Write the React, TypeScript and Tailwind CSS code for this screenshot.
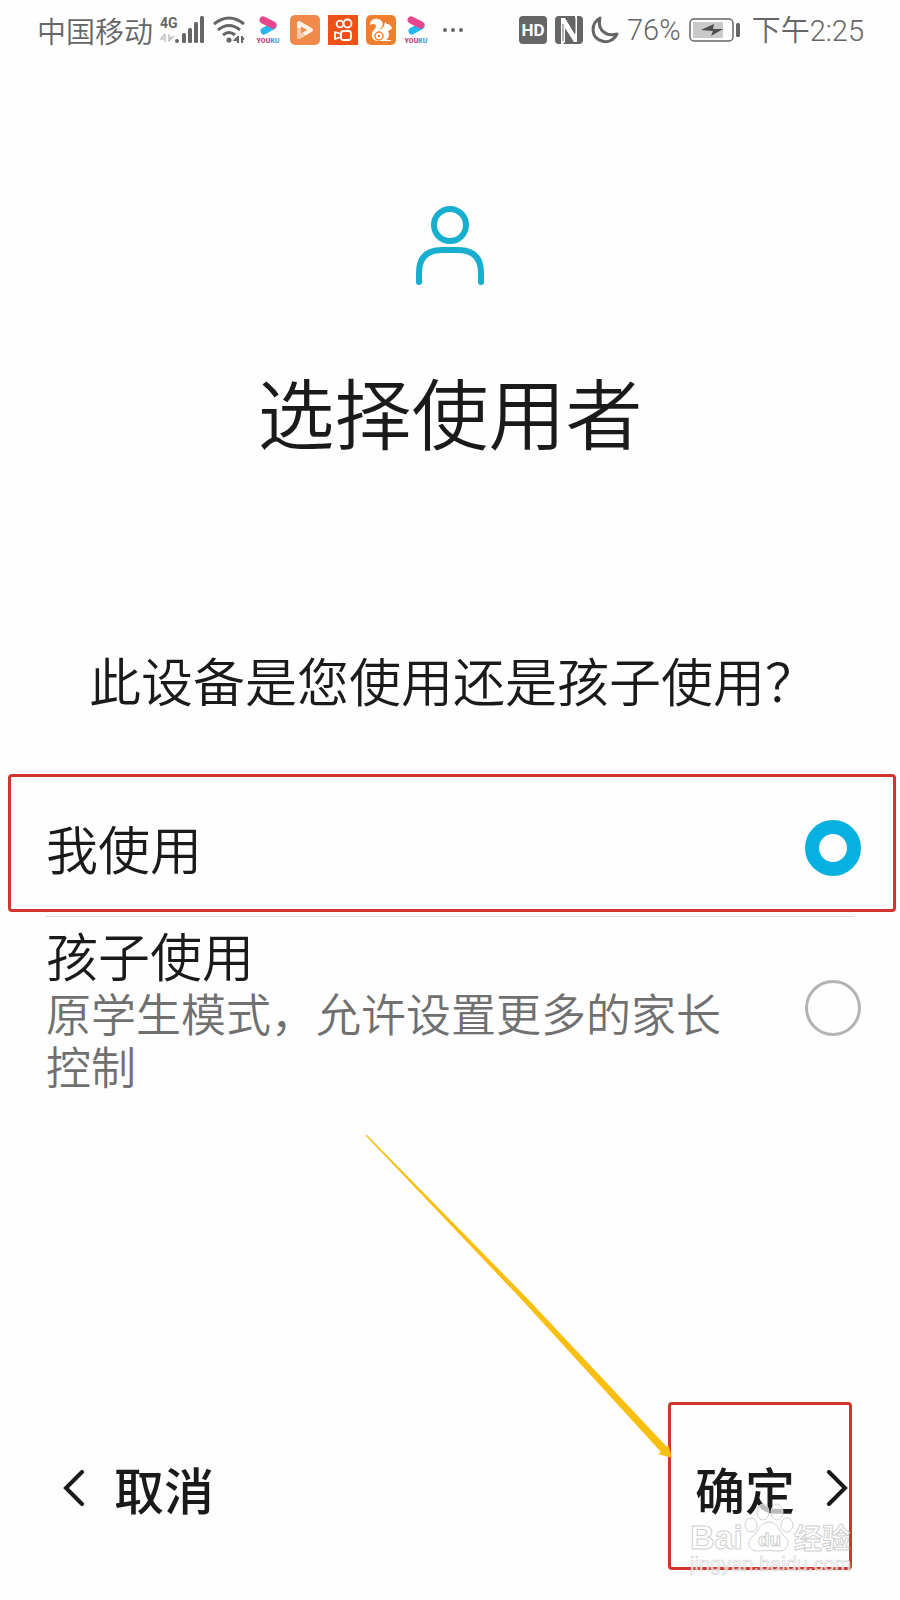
import { useState } from "react";

const FONT = 'font-["Noto_Sans_CJK_SC",sans-serif]';

const OPTIONS = [
    { id: "me", label: "我使用", hint: "" },
    { id: "child", label: "孩子使用", hint: "原学生模式，允许设置更多的家长控制" },
];

function SignalIcon() {
    return (
        <svg className="w-[46px] h-7" viewBox="0 0 46 28" fill="#666">
            <text x="0" y="12" fontSize="14" fontWeight="700" fontFamily="Roboto, sans-serif">
                4G
            </text>
            <path d="M5 18v8M5 18l-4 5h4M9 26v-8M9 22l4-1-4 4" stroke="#c4c4c4" strokeWidth="1.5" fill="none" />
            <circle cx="17" cy="25" r="2" />
            <rect x="22" y="17" width="4" height="10" rx="1.5" />
            <rect x="28" y="12" width="4" height="15" rx="1.5" />
            <rect x="34" y="6" width="4" height="21" rx="1.5" />
            <rect x="40" y="0" width="4" height="27" rx="1.5" />
        </svg>
    );
}

function WifiIcon() {
    return (
        <svg className="w-8 h-7" viewBox="0 0 32 28" fill="none" stroke="#666" strokeWidth="3">
            <path d="M1 8Q16-4 31 8M5 14Q16 5 27 14M10 19Q16 14 22 19" />
            <circle cx="16" cy="24" r="2.6" fill="#666" stroke="none" />
            <path d="M25 20v7M25 21l-3 3h3M29 20v7M29 24l2-2" strokeWidth="2" />
        </svg>
    );
}

function YoukuIcon() {
    return (
        <svg className="w-[26px] h-7" viewBox="0 0 26 28">
            <path d="M8 15l9-5" stroke="#28b8ee" strokeWidth="7" strokeLinecap="round" />
            <path d="M7 4l10 5" stroke="#e8468c" strokeWidth="7" strokeLinecap="round" />
            <text x="12" y="27" textAnchor="middle" fontSize="7" fontWeight="900" fontFamily="Roboto, sans-serif" fill="#c0417f">
                YOU<tspan fill="#4ba3dc">KU</tspan>
            </text>
        </svg>
    );
}

function VideoIcon() {
    return (
        <svg className="w-[30px] h-[30px]" viewBox="0 0 30 30">
            <rect width="30" height="30" rx="5" fill="#f08a4b" />
            <path d="M9 8v14l12-7z" fill="#f08a4b" stroke="#fff1e4" strokeWidth="4" strokeLinejoin="round" />
            <path d="M9 13v9l5-3" fill="none" stroke="#f8c9a6" strokeWidth="4" strokeLinejoin="round" />
        </svg>
    );
}

function KuaishouIcon() {
    return (
        <svg className="w-[30px] h-[30px]" viewBox="0 0 30 30" fill="none" stroke="#fff" strokeWidth="1.8">
            <rect width="30" height="30" fill="#ee5117" stroke="none" />
            <circle cx="12" cy="9" r="3.4" />
            <circle cx="19.5" cy="8.5" r="4" />
            <rect x="13" y="16" width="10" height="9" rx="2.5" />
            <path d="M7 17v7l6-2v-3z" strokeLinejoin="round" />
        </svg>
    );
}

function SquirrelIcon() {
    return (
        <svg className="w-[30px] h-[30px]" viewBox="0 0 30 30">
            <rect width="30" height="30" rx="5" fill="#ef7f2e" />
            <path
                d="M4 10C4 5 8 3 12 4c5 1 6 6 3 9l-2 2c2-1 4-2 5-4l1-4 2 2c3 0 4 2 5 4-1 2-3 2-4 3 2 4 1 7-2 9h5v1H12c-5 0-7-4-6-8 1-3 4-4 4-7 0-2-3-3-6-1z"
                fill="#fff"
            />
            <circle cx="13" cy="21" r="4" fill="none" stroke="#ef7f2e" strokeWidth="1.5" />
            <circle cx="13" cy="21" r="1.2" fill="#ef7f2e" />
        </svg>
    );
}

function NfcIcon() {
    return (
        <svg className="w-7 h-7" viewBox="0 0 28 28">
            <rect width="28" height="28" rx="4" fill="#666" />
            <path d="M7 28V3M21 0v25" fill="none" stroke="#fff" strokeWidth="2" />
            <path d="M6 2h4l12 20v4h-3L10 12v14l-2 2H6z" fill="#fff" />
            <path d="M8 8v17M20 2v15" stroke="#666" strokeWidth="1" />
        </svg>
    );
}

function MoonIcon() {
    return (
        <svg className="w-7 h-7" viewBox="0 0 28 28" fill="none" stroke="#666" strokeWidth="3" strokeLinejoin="round">
            <path d="M9 2C-1 8 0 22 11 25c6 2 12-1 15-7C15 21 6 14 9 2z" />
        </svg>
    );
}

function BatteryIcon() {
    return (
        <svg className="w-[51px] h-6" viewBox="0 0 51 24">
            <rect x="1" y="1" width="43" height="22" rx="4" fill="none" stroke="#666" strokeWidth="1.5" />
            <rect x="4" y="4" width="30" height="16" fill="#c9c9c9" />
            <path d="M12 12l13-6-1 5h10L22 18l2-5z" fill="#4d4d4d" />
            <rect x="47" y="5" width="4" height="14" rx="1.5" fill="#666" />
        </svg>
    );
}

function StatusBar() {
    return (
        <header className="flex items-center justify-between h-[60px] pl-[37px] pr-9 text-[#666] text-[29px] leading-none font-[350]">
            <div className="flex items-center gap-[7px]">
                <span>中国移动</span>
                <SignalIcon />
                <WifiIcon />
                <div className="flex items-center gap-2 pl-1">
                    <YoukuIcon />
                    <VideoIcon />
                    <KuaishouIcon />
                    <SquirrelIcon />
                    <YoukuIcon />
                </div>
                <svg className="w-6 h-6 ml-1" viewBox="0 0 24 24" fill="#666">
                    <circle cx="4" cy="12" r="2" />
                    <circle cx="12" cy="12" r="2" />
                    <circle cx="20" cy="12" r="2" />
                </svg>
            </div>
            <div className="flex items-center gap-2">
                <span className="flex items-center justify-center w-7 h-7 rounded bg-[#666] text-white text-[17px] font-bold font-[Roboto,sans-serif]">
                    HD
                </span>
                <NfcIcon />
                <MoonIcon />
                <span className="font-[Roboto,sans-serif]">76%</span>
                <BatteryIcon />
                <span className="pl-1">
                    下午<span className="font-[Roboto,sans-serif]">2:25</span>
                </span>
            </div>
        </header>
    );
}

function Watermark() {
    return (
        <svg
            className="absolute right-0 -bottom-4 w-[162px] h-[84px] pointer-events-none"
            viewBox="0 0 162 84"
            fill="#fff"
            fillOpacity="0.7"
            stroke="#d0d0d0"
            strokeWidth="1"
            aria-hidden="true"
        >
            <g fontFamily="Liberation Sans, sans-serif" fontWeight="700">
                <text x="0" y="47" fontSize="34">Bai</text>
                <ellipse cx="61" cy="23" rx="6" ry="7" />
                <ellipse cx="73" cy="10" rx="6" ry="8" />
                <ellipse cx="87" cy="10" rx="6" ry="8" />
                <ellipse cx="97" cy="23" rx="6" ry="7" />
                <path d="M79 20c9 0 10 10 16 15 6 6 2 14-6 14-5 0-15-1-21 0-9 0-12-8-6-14 6-5 8-15 17-15z" />
                <text x="68" y="44" fontSize="19">du</text>
                <text x="104" y="47" fontSize="28" fontFamily="Noto Sans CJK SC, sans-serif">经验</text>
            </g>
            <text x="0" y="69" fontSize="20" fontFamily="Liberation Sans, sans-serif" strokeWidth="0.6">
                jingyan.baidu.com
            </text>
        </svg>
    );
}

export default function App() {
    const [selected, setSelected] = useState("me");

    return (
        <div className={`relative flex flex-col min-h-screen bg-[#fefefe] text-[#1a1a1a] ${FONT}`} lang="zh-CN">
            <StatusBar />

            <main className="flex-1">
                <svg
                    className="block mx-auto mt-[145px] w-[70px] h-20"
                    viewBox="0 0 70 80"
                    fill="none"
                    stroke="#17aed0"
                    strokeWidth="6"
                    strokeLinecap="round"
                >
                    <circle cx="35" cy="20" r="16" />
                    <path d="M4 77V68Q4 45 27 45H43Q66 45 66 68V77" />
                </svg>
                <h1 className="mt-[70px] text-center text-[77px] leading-[112px] font-[350]">选择使用者</h1>
                <p className="mt-[175px] px-[89px] text-[52px] leading-[76px] whitespace-nowrap font-[350]">
                    此设备是您使用还是孩子使用？
                </p>

                <fieldset className="mt-[56px]">
                    {OPTIONS.map((option, i) => (
                        <div key={option.id}>
                            {i > 0 && <hr className="ml-[46px] mr-[46px] mt-1 border-[#dcdce0]" />}
                            <label
                                className={`flex items-center justify-between ${
                                    i === 0
                                        ? "ml-2 mr-1 h-[138px] pt-[10px] pl-[35px] pr-[32px] border-3 border-[#d3352e] rounded-sm"
                                        : "pl-[46px] pr-[39px] pt-[7px] pb-1"
                                }`}
                            >
                                <span className="w-[680px]">
                                    <span className="block text-[52px] leading-[62px] font-[350]">{option.label}</span>
                                    {option.hint && (
                                        <span className="block text-[45px] leading-[53px] font-[350] text-[#707070]">
                                            {option.hint}
                                        </span>
                                    )}
                                </span>
                                <input
                                    type="radio"
                                    name="user"
                                    className="appearance-none shrink-0 size-14 rounded-full border-3 border-[#b3b3b3] checked:border-[14px] checked:border-[#06b0e0]"
                                    checked={selected === option.id}
                                    onChange={() => setSelected(option.id)}
                                />
                            </label>
                        </div>
                    ))}
                </fieldset>
            </main>

            <footer className="flex items-end justify-between pl-[62px] pr-[48px] pb-[30px] text-[50px] leading-[72px] font-medium">
                <button type="button" className="flex items-center gap-[29px] pb-[46px]">
                    <svg className="w-[23px] h-9" viewBox="0 0 23 36" fill="none" stroke="#1a1a1a" strokeWidth="4" strokeLinecap="round">
                        <path d="M20 2L4 18l16 16" />
                    </svg>
                    取消
                </button>
                <div className="relative">
                    <button
                        type="button"
                        className="flex items-center justify-between w-[184px] h-[168px] pt-1 pl-6 border-3 border-[#d3352e] rounded-sm"
                    >
                        确定
                        <svg className="w-[23px] h-9" viewBox="0 0 23 36" fill="none" stroke="#1a1a1a" strokeWidth="4" strokeLinecap="round">
                            <path d="M3 2l16 16L3 34" />
                        </svg>
                    </button>
                    <Watermark />
                    <svg className="absolute right-[180px] bottom-[112px] w-[306px] h-[323px] pointer-events-none" viewBox="0 0 306 323" fill="#f9bf10">
                        <path d="M0 0L1 0L159 161L301 312L302 309L306 323L292 319L295 317L156 165L0 1z" />
                    </svg>
                </div>
            </footer>
        </div>
    );
}
